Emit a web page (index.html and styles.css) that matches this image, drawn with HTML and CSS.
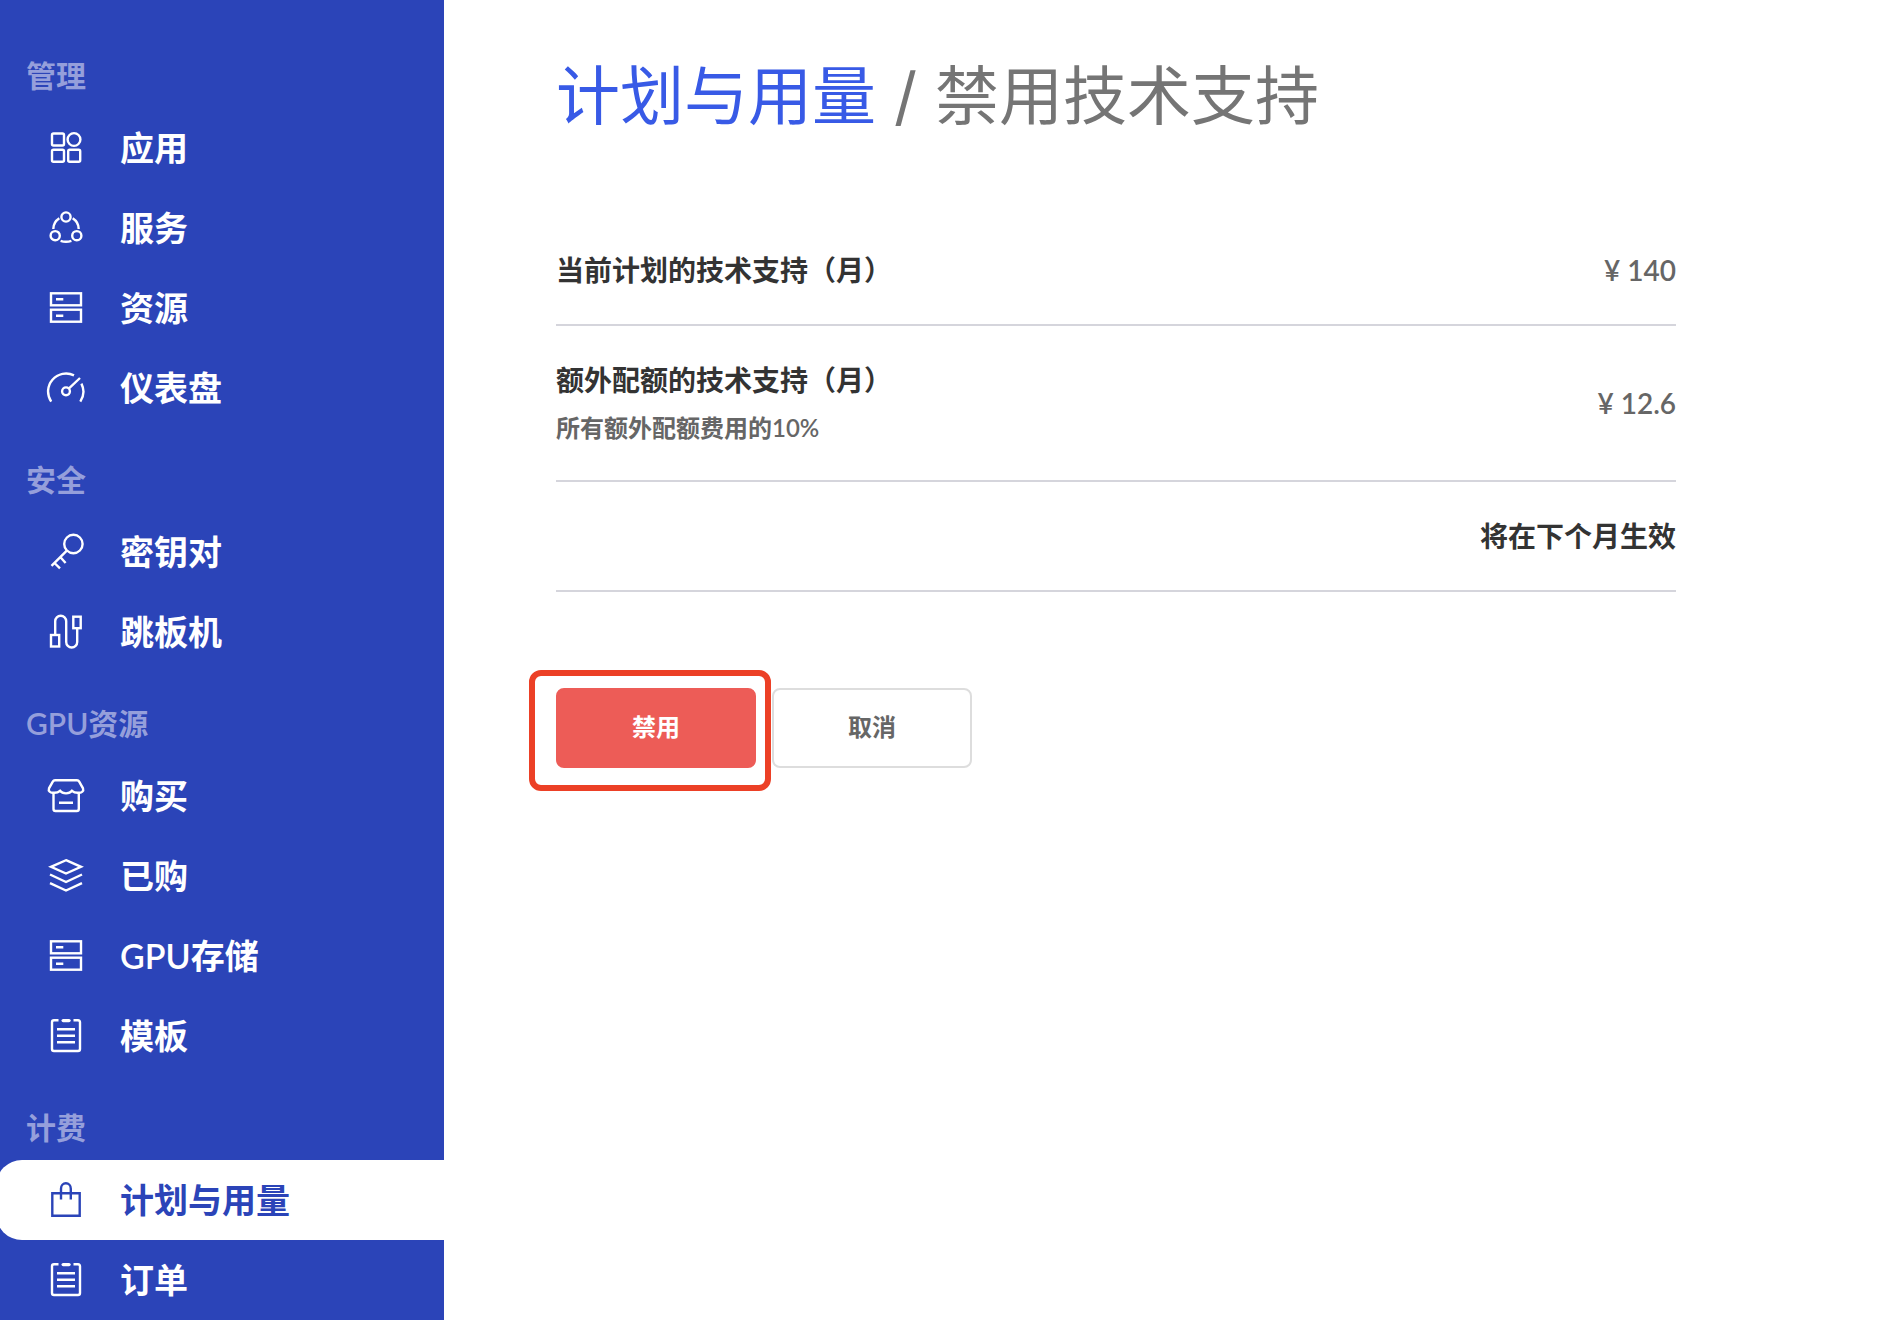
FILE: index.html
```html
<!DOCTYPE html>
<html lang="zh-CN">
<head>
<meta charset="utf-8">
<meta name="viewport" content="width=device-width, initial-scale=1">
<title>计划与用量 / 禁用技术支持</title>
<link rel="stylesheet" href="styles.css">
</head>
<body>
<svg class="sprite" aria-hidden="true">
  <symbol id="i-apps" viewBox="0 0 40 40"><rect x="6" y="5.5" width="12" height="12" rx="1.5"/><circle cx="28" cy="11.5" r="6.4"/><rect x="6" y="21.8" width="12" height="12" rx="1.5"/><rect x="22.2" y="21.8" width="12" height="12" rx="1.5"/></symbol>
  <symbol id="i-service" viewBox="0 0 40 40"><circle cx="20" cy="9" r="4.6"/><circle cx="9.2" cy="27.7" r="4.6"/><circle cx="30.8" cy="27.7" r="4.6"/><path d="M7.3 21A13 13 0 0 1 13.3 10.3M32.7 21A13 13 0 0 0 26.7 10.3M14.6 32.8Q20 34.8 25.4 32.8"/></symbol>
  <symbol id="i-server" viewBox="0 0 40 40"><rect x="5" y="5.3" width="30" height="12"/><rect x="5" y="21.7" width="30" height="12"/><path d="M10 11.3h7.3M10 27.7h7.3"/></symbol>
  <symbol id="i-gauge" viewBox="0 0 40 40"><circle cx="20" cy="23.3" r="3.9"/><path d="M23 20.4L34 10M5.2 33.6A18 18 0 0 1 28 7.3M35.4 15.6A18 18 0 0 1 34.3 33.6"/></symbol>
  <symbol id="i-key" viewBox="0 0 40 40"><circle cx="27.4" cy="12" r="9.2"/><path d="M20.8 18.6L5.5 33.8M8.5 31L14 36.3M14.5 25.2L19.6 31"/></symbol>
  <symbol id="i-jump" viewBox="0 0 40 40"><rect x="5" y="23" width="8.2" height="11.5"/><rect x="27.3" y="4.7" width="7.4" height="11.5"/><path d="M9.2 23V9.2a5.5 5.5 0 0 1 11 0V30a5.5 5.5 0 0 0 11 0V16.5"/></symbol>
  <symbol id="i-shop" viewBox="0 0 40 40"><path d="M9 4.3H31Q32.5 4.3 33.2 5.6L37 12.3C38 15 35.5 17.3 32.6 16.7Q28.5 17 26 14.8Q24 17.4 20 17.4T14 14.8Q11.5 17 7.4 16.7C4.5 17.3 2 15 3 12.3L6.8 5.6Q7.5 4.3 9 4.3ZM7.5 16.7V33Q7.5 35 9.5 35H30.8Q32.8 35 32.8 33V16.7M13 26.7H27"/></symbol>
  <symbol id="i-layers" viewBox="0 0 40 40"><path d="M20 4.2L35 10.8L20 17.5L5 10.8ZM4 18.5L20 26L36 18.5M4 27.2L20 34.5L36 27.2"/></symbol>
  <symbol id="i-list" viewBox="0 0 40 40"><path d="M12.5 4.3H8Q6 4.3 6 6.3V33Q6 35 8 35H32Q34 35 34 33V6.3Q34 4.3 32 4.3H27.5M11 13.3H29M11 19.7H29M11 26.3H29"/><path class="thick" d="M17.2 4.6H23"/></symbol>
  <symbol id="i-bag" viewBox="0 0 40 40"><path d="M6.3 13.3H33.7V35.7H6.3ZM15 19.5V8.7a4.9 5.4 0 0 1 9.8 0V19.5"/></symbol>
</svg>
<div class="layout">
  <nav class="sidebar" aria-label="主导航">
    <h2 class="group">管理</h2>
    <a class="item" href="#"><svg class="icon"><use href="#i-apps"/></svg>应用</a>
    <a class="item" href="#"><svg class="icon"><use href="#i-service"/></svg>服务</a>
    <a class="item" href="#"><svg class="icon"><use href="#i-server"/></svg>资源</a>
    <a class="item" href="#"><svg class="icon"><use href="#i-gauge"/></svg>仪表盘</a>
    <h2 class="group">安全</h2>
    <a class="item" href="#"><svg class="icon"><use href="#i-key"/></svg>密钥对</a>
    <a class="item" href="#"><svg class="icon"><use href="#i-jump"/></svg>跳板机</a>
    <h2 class="group">GPU资源</h2>
    <a class="item" href="#"><svg class="icon"><use href="#i-shop"/></svg>购买</a>
    <a class="item" href="#"><svg class="icon"><use href="#i-layers"/></svg>已购</a>
    <a class="item" href="#"><svg class="icon"><use href="#i-server"/></svg>GPU存储</a>
    <a class="item" href="#"><svg class="icon"><use href="#i-list"/></svg>模板</a>
    <h2 class="group">计费</h2>
    <a class="item active" href="#" aria-current="page"><svg class="icon"><use href="#i-bag"/></svg>计划与用量</a>
    <a class="item" href="#"><svg class="icon"><use href="#i-list"/></svg>订单</a>
  </nav>
  <main class="main">
    <div class="content">
      <h1 class="title"><a href="#">计划与用量</a> / 禁用技术支持</h1>
      <div class="rows">
        <div class="row">
          <p class="name">当前计划的技术支持（月）</p>
          <p class="value">¥ 140</p>
        </div>
        <div class="row">
          <div>
            <p class="name">额外配额的技术支持（月）</p>
            <p class="note">所有额外配额费用的10%</p>
          </div>
          <p class="value">¥ 12.6</p>
        </div>
        <div class="row end">
          <p class="name">将在下个月生效</p>
        </div>
      </div>
      <div class="actions">
        <div class="marked"><button class="btn danger" type="button">禁用</button></div>
        <button class="btn" type="button">取消</button>
      </div>
    </div>
  </main>
</div>
</body>
</html>
```
FILE: styles.css
```css
* { box-sizing: border-box; }
body, h1, h2, p { margin: 0; }
body {
  background: #fff;
  color: #333;
  font-family: Lato, "Noto Sans CJK SC", sans-serif;
  font-weight: 600;
}
a { color: inherit; text-decoration: none; }

.sprite { position: absolute; width: 0; height: 0; }
.layout { display: flex; min-height: 100vh; }

/* Sidebar */
.sidebar {
  flex: 0 0 444px;
  padding-top: 24px;
  overflow: hidden;
  background: #2b44b8;
  color: #fff;
}
.group {
  padding: 31px 26px 13px;
  font-size: 30px;
  font-weight: 600;
  line-height: 40px;
  color: #959fdb;
}
.item {
  display: flex;
  align-items: center;
  gap: 34px;
  height: 80px;
  padding-left: 46px;
  font-size: 34px;
  line-height: 40px;
}
.item.active {
  margin-left: -4px;
  padding-left: 50px;
  border-radius: 26px 0 0 26px;
  background: #fff;
  color: #2b44b8;
}
.icon {
  flex: none;
  width: 40px;
  height: 40px;
  fill: none;
  stroke: currentColor;
  stroke-width: 2.4;
}
.thick { stroke-width: 3.4; stroke-linecap: round; }

/* Content */
.main { flex: 1; padding: 56px 112px; }
.content { max-width: 1120px; }
.title {
  margin-bottom: 80px;
  font-family: Inter, "Noto Sans CJK SC", sans-serif;
  font-size: 64px;
  font-weight: 400;
  line-height: 80px;
  color: #757575;
}
.title a { color: #385ae6; }
.row {
  display: flex;
  align-items: center;
  justify-content: space-between;
  padding: 36px 0;
  border-bottom: 2px solid #d5d5dc;
}
.row.end { justify-content: flex-end; }
.name { font-size: 28px; line-height: 36px; }
.note {
  margin-top: 14px;
  font-size: 24px;
  line-height: 32px;
  color: #666;
}
.value { font-size: 28px; line-height: 36px; color: #666; }

.actions { display: flex; gap: 16px; margin-top: 96px; }
.btn {
  display: block;
  width: 200px;
  height: 80px;
  padding: 0 0 2px;
  border: 2px solid #ddd;
  border-radius: 8px;
  background: #fff;
  color: #666;
  font: inherit;
  font-size: 24px;
  line-height: 32px;
}
.danger {
  border-color: #ed5c57;
  background: #ed5c57;
  color: #fff;
}

/* Callout frame around the button it points out */
.marked { position: relative; }
.marked::after {
  content: "";
  position: absolute;
  inset: -18px -15px -23px -27px;
  border: 6px solid #ec4026;
  border-radius: 12px;
  pointer-events: none;
}
```
